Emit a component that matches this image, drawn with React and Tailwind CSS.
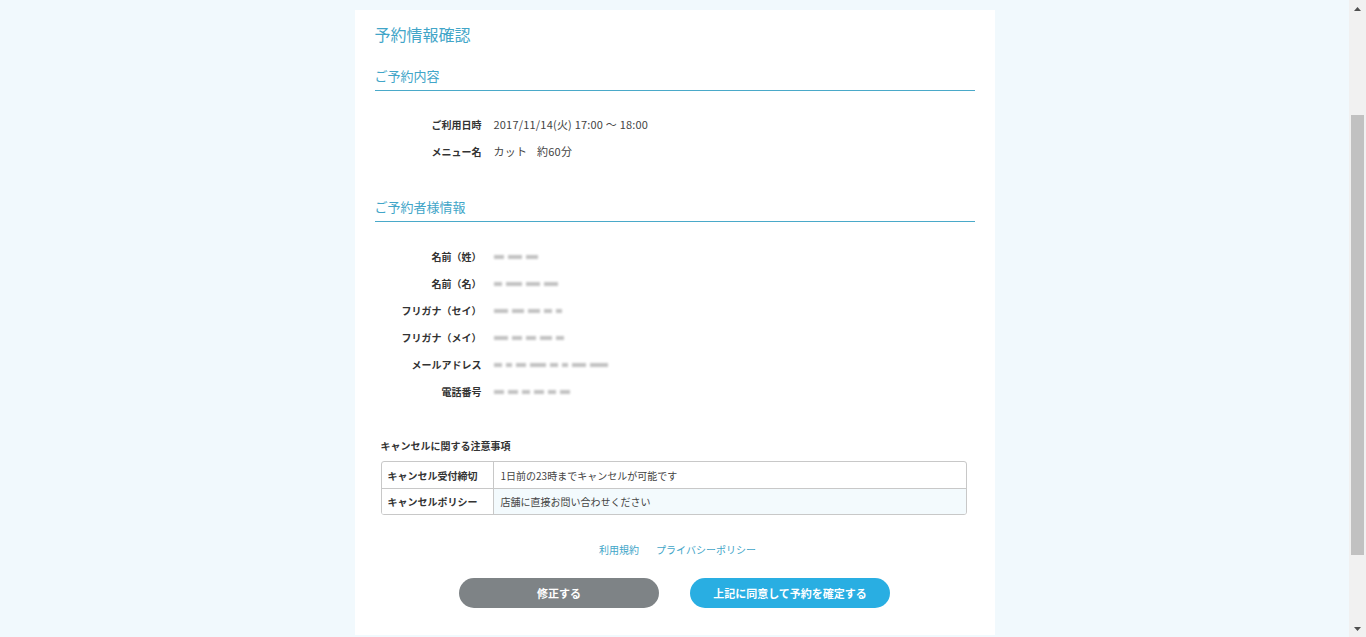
const font = { fontFamily: '"Noto Sans CJK JP", "Noto Sans", sans-serif' };

const Blur = ({ widths }) => (
  <div className="flex items-center gap-[4px] blur-[0.8px]">
    {widths.map((w, i) => (
      <span key={i} className="block h-[4px] bg-[#9a9a9a] opacity-60" style={{ width: w }}></span>
    ))}
  </div>
);

const Row = ({ label, children }) => (
  <div className="flex h-[27px] items-center">
    <div className="w-[107px] shrink-0 text-right text-[10px] font-semibold text-[#333]">{label}</div>
    <div className="pl-[12px] text-[11px] tracking-[0.2px] text-[#444]">{children}</div>
  </div>
);

const SectionTitle = ({ children, className = '' }) => (
  <h2 className={`border-b border-[#4aa9c9] pb-[4px] text-[13px] leading-[20px] text-[#41a5c8] ${className}`}>
    {children}
  </h2>
);

const Scrollbar = () => (
  <div className="flex h-screen w-[17px] shrink-0 flex-col bg-[#f1f1f1]">
    <div className="flex h-[17px] items-center justify-center">
      <svg width="7" height="4" viewBox="0 0 7 4"><path d="M3.5 0L7 4H0z" fill="#505050" /></svg>
    </div>
    <div className="h-[98px]"></div>
    <div className="mx-[2px] h-[440px] bg-[#c1c1c1]"></div>
    <div className="flex-1"></div>
    <div className="flex h-[17px] items-center justify-center">
      <svg width="7" height="4" viewBox="0 0 7 4"><path d="M0 0H7L3.5 4z" fill="#505050" /></svg>
    </div>
  </div>
);

const App = () => {
  return (
    <div style={font} className="flex h-screen overflow-hidden bg-[#f1f9fd]">
      <div className="flex-1 pt-[10px]">
        <div className="mx-auto w-[640px] bg-white px-[20px] pt-[12px] pb-[27px]">
          <h1 className="text-[16px] leading-[24px] text-[#41a5c8]">予約情報確認</h1>

          <SectionTitle className="mt-[20px]">ご予約内容</SectionTitle>
          <div className="mt-[20px]">
            <Row label="ご利用日時">2017/11/14(火) 17:00 〜 18:00</Row>
            <Row label="メニュー名">
              カット<span className="ml-[10px]">約60分</span>
            </Row>
          </div>

          <SectionTitle className="mt-[32px]">ご予約者様情報</SectionTitle>
          <div className="mt-[21px]">
            <Row label="名前（姓）"><Blur widths={[10, 14, 12]} /></Row>
            <Row label="名前（名）"><Blur widths={[8, 16, 14, 14]} /></Row>
            <Row label="フリガナ（セイ）"><Blur widths={[14, 12, 12, 8, 6]} /></Row>
            <Row label="フリガナ（メイ）"><Blur widths={[14, 10, 10, 12, 8]} /></Row>
            <Row label="メールアドレス"><Blur widths={[8, 6, 10, 16, 8, 6, 14, 18]} /></Row>
            <Row label="電話番号"><Blur widths={[10, 10, 8, 10, 8, 10]} /></Row>
          </div>

          <p className="mt-[33px] ml-[6px] text-[10px] font-semibold leading-[16px] text-[#333]">
            キャンセルに関する注意事項
          </p>
          <div className="mt-[7px] ml-[6px] w-[586px] overflow-hidden rounded-[3px] border border-[#c8c8c8] text-[10px] text-[#444]">
            <div className="flex h-[26px] items-center">
              <div className="flex h-full w-[112px] items-center border-r border-[#c8c8c8] pl-[6px] font-semibold text-[#333]">
                キャンセル受付締切
              </div>
              <div className="pl-[7px]">1日前の23時までキャンセルが可能です</div>
            </div>
            <div className="flex h-[26px] items-center border-t border-[#c8c8c8] bg-[#f3fafd]">
              <div className="flex h-full w-[112px] items-center border-r border-[#c8c8c8] bg-white pl-[6px] font-semibold text-[#333]">
                キャンセルポリシー
              </div>
              <div className="pl-[7px]">店舗に直接お問い合わせください</div>
            </div>
          </div>

          <div className="mt-[27px] flex justify-center gap-[17px] pl-[6px] text-[10px] leading-[16px] text-[#41a5c8]">
            <a href="#">利用規約</a>
            <a href="#">プライバシーポリシー</a>
          </div>

          <div className="mt-[20px] flex justify-center gap-[31px]">
            <button className="h-[30px] w-[200px] rounded-full bg-[#7e8386] text-[11px] font-bold text-white">
              修正する
            </button>
            <button className="h-[30px] w-[200px] rounded-full bg-[#29aee2] text-[11px] font-bold text-white">
              上記に同意して予約を確定する
            </button>
          </div>
        </div>
      </div>
      <Scrollbar />
    </div>
  );
};

export default App;
